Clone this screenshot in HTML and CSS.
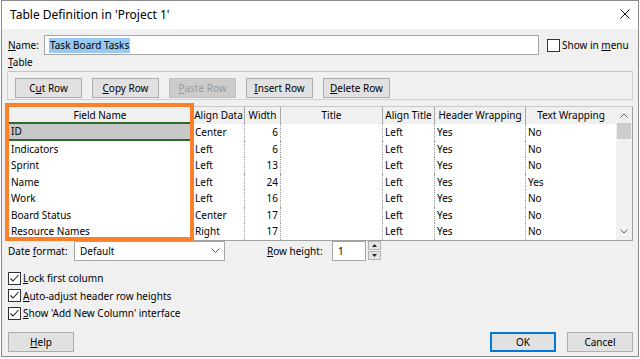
FILE: index.html
```html
<!DOCTYPE html>
<html lang="en">
<head>
    <meta charset="UTF-8">
    <title>Table Definition</title>
    <link rel="stylesheet" href="styles.css">
</head>
<body>
<div class="dialog">
    <div class="titlebar">
        <span class="title">Table Definition in 'Project 1'</span>
        <svg class="close" width="10" height="10" viewBox="0 0 10 10"><path d="M0.5 0.5 L9.5 9.5 M9.5 0.5 L0.5 9.5" stroke="#111" stroke-width="1" fill="none"/></svg>
    </div>

    <div class="content">
        <div class="name_row">
            <label class="name_label"><u>N</u>ame:</label>
            <div class="textbox name_box"><span class="sel">Task Board Tasks</span></div>
            <label class="check"><span class="box"></span><span>Show in <u>m</u>enu</span></label>
        </div>

        <div class="section_label"><u>T</u>able</div>

        <div class="toolbar">
            <button class="btn">C<u>u</u>t Row</button>
            <button class="btn"><u>C</u>opy Row</button>
            <button class="btn disabled"><u>P</u>aste Row</button>
            <button class="btn"><u>I</u>nsert Row</button>
            <button class="btn"><u>D</u>elete Row</button>
        </div>

        <div class="grid">
            <div class="cells">
                <div class="hd field_hd">Field Name</div>
                <div class="hd">Align Data</div>
                <div class="hd">Width</div>
                <div class="hd">Title</div>
                <div class="hd">Align Title</div>
                <div class="hd">Header Wrapping</div>
                <div class="hd last">Text Wrapping</div>

                <div class="c field current">ID</div>
                <div class="c dot">Center</div>
                <div class="c dot num">6</div>
                <div class="c dot"></div>
                <div class="c dot">Left</div>
                <div class="c dot">Yes</div>
                <div class="c">No</div>

                <div class="c field">Indicators</div>
                <div class="c dot">Left</div>
                <div class="c dot num">6</div>
                <div class="c dot"></div>
                <div class="c dot">Left</div>
                <div class="c dot">Yes</div>
                <div class="c">No</div>

                <div class="c field">Sprint</div>
                <div class="c dot">Left</div>
                <div class="c dot num">13</div>
                <div class="c dot"></div>
                <div class="c dot">Left</div>
                <div class="c dot">Yes</div>
                <div class="c">No</div>

                <div class="c field">Name</div>
                <div class="c dot">Left</div>
                <div class="c dot num">24</div>
                <div class="c dot"></div>
                <div class="c dot">Left</div>
                <div class="c dot">Yes</div>
                <div class="c">Yes</div>

                <div class="c field">Work</div>
                <div class="c dot">Left</div>
                <div class="c dot num">16</div>
                <div class="c dot"></div>
                <div class="c dot">Left</div>
                <div class="c dot">Yes</div>
                <div class="c">No</div>

                <div class="c field">Board Status</div>
                <div class="c dot">Center</div>
                <div class="c dot num">17</div>
                <div class="c dot"></div>
                <div class="c dot">Left</div>
                <div class="c dot">Yes</div>
                <div class="c">No</div>

                <div class="c field">Resource Names</div>
                <div class="c dot">Right</div>
                <div class="c dot num">17</div>
                <div class="c dot"></div>
                <div class="c dot">Left</div>
                <div class="c dot">Yes</div>
                <div class="c">No</div>
            </div>
            <div class="scrollbar">
                <div class="arrow">
                    <svg width="8" height="5" viewBox="0 0 8 5"><path d="M0.5 4.5 L4 1 L7.5 4.5" stroke="#606060" fill="none"/></svg>
                </div>
                <div class="thumb"></div>
                <div class="track"></div>
                <div class="arrow">
                    <svg width="8" height="5" viewBox="0 0 8 5"><path d="M0.5 0.5 L4 4 L7.5 0.5" stroke="#606060" fill="none"/></svg>
                </div>
            </div>
            <!-- 強調枠 -->
            <div class="highlight"></div>
        </div>

        <div class="format_row">
            <label class="fmt_label">Date <u>f</u>ormat:</label>
            <div class="textbox combo">
                <span>Default</span>
                <svg width="9" height="5" viewBox="0 0 9 5"><path d="M0.5 0.5 L4.5 4.5 L8.5 0.5" stroke="#555" fill="none"/></svg>
            </div>
            <label class="rh_label"><u>R</u>ow height:</label>
            <div class="textbox spin_box">1</div>
            <div class="spin">
                <div class="spin_btn"><svg width="5" height="3" viewBox="0 0 5 3"><path d="M0 3 L2.5 0 L5 3 Z" fill="#222"/></svg></div>
                <div class="spin_btn"><svg width="5" height="3" viewBox="0 0 5 3"><path d="M0 0 L2.5 3 L5 0 Z" fill="#222"/></svg></div>
            </div>
        </div>

        <div class="checks">
            <label class="check"><span class="box"><svg width="11" height="11" viewBox="0 0 11 11"><path d="M1.5 5.5 L4 8 L9.5 2" stroke="#222" stroke-width="1.1" fill="none"/></svg></span><span><u>L</u>ock first column</span></label>
            <label class="check"><span class="box"><svg width="11" height="11" viewBox="0 0 11 11"><path d="M1.5 5.5 L4 8 L9.5 2" stroke="#222" stroke-width="1.1" fill="none"/></svg></span><span><u>A</u>uto-adjust header row heights</span></label>
            <label class="check"><span class="box"><svg width="11" height="11" viewBox="0 0 11 11"><path d="M1.5 5.5 L4 8 L9.5 2" stroke="#222" stroke-width="1.1" fill="none"/></svg></span><span><u>S</u>how 'Add New Column' interface</span></label>
        </div>

        <div class="footer">
            <button class="btn"><u>H</u>elp</button>
            <div class="footer_right">
                <button class="btn default">OK</button>
                <button class="btn">Cancel</button>
            </div>
        </div>
    </div>
</div>
</body>
</html>
```

FILE: styles.css
```css
body {
    margin: 0;
    background-color: #fff;
    font-family: "Noto Sans", "Open Sans", sans-serif;
    font-size: 10px;
    color: #000;
}
u {
    text-decoration-thickness: 1px;
    text-underline-offset: 1px;
}

/*ダイアログ全体*/
.dialog {
    width: 638px;
    height: 357px;
    margin-left: 1px;
    box-sizing: border-box;
    border: 1px solid #8a8a8a;
    background-color: #f0f0f0;
    display: flex;
    flex-direction: column;
}

.titlebar {
    height: 28px;
    background-color: #fff;
    display: flex;
    align-items: center;
    justify-content: space-between;
    padding: 0 8px 0 8px;
}
.title {
    font-size: 12px;
    margin-top: -1px;
}
.close {
    margin-top: -3px;
}

.content {
    padding: 0 5px 0 6px;
    flex: 1;
}

/*テキストボックス*/
.textbox {
    box-sizing: border-box;
    height: 20px;
    background-color: #fff;
    border: 1px solid #a5a5a5;
    display: flex;
    align-items: center;
}

.name_row {
    display: flex;
    align-items: center;
    margin-top: 6px;
    height: 20px;
}
.name_label {
    width: 36px;
}
.name_box {
    width: 495px;
    padding-left: 4px;
}
.sel {
    background-color: #99c9ef;
    line-height: 15px;
    padding: 0 1px;
}
.name_row .check {
    margin-left: 8px;
}

.check {
    display: flex;
    align-items: center;
    gap: 2px;
}
.box {
    width: 13px;
    height: 13px;
    box-sizing: border-box;
    border: 1px solid #333;
    background-color: #fff;
    display: flex;
    align-items: center;
    justify-content: center;
}

.section_label {
    height: 12px;
    line-height: 12px;
    margin-top: 1px;
}

/*ボタン類*/
.toolbar {
    margin: 3px 0 0 -1px;
    width: 626px;
    height: 29px;
    box-sizing: border-box;
    border: 1px solid #d0d0d0;
    border-top-color: #c4c4c4;
    padding: 6px 0 0 7px;
    display: flex;
    gap: 10px;
}
.btn {
    width: 67px;
    height: 20px;
    box-sizing: border-box;
    border: 1px solid #adadad;
    background-color: #e1e1e1;
    font-family: inherit;
    font-size: 10px;
    color: #000;
    padding: 0;
}
.btn.disabled {
    background-color: #cccccc;
    border-color: #bfbfbf;
    color: #9a9a9a;
}
.btn.default {
    border: 2px solid #0078d7;
}

/*グリッド*/
.grid {
    position: relative;
    margin: 6px 0 0 -1px;
    width: 626px;
    box-sizing: border-box;
    border: 1px solid #a0a0a0;
    border-top-color: #c8c8c8;
    display: flex;
    background-color: #fff;
}
.cells {
    display: grid;
    grid-template-columns: 185px 52px 36px 102px 52px 91px 90px;
    grid-template-rows: 17px repeat(7, 16.5px);
}
.hd {
    background-color: #f0f0f0;
    border-right: 1px solid #a8a8a8;
    box-sizing: border-box;
    text-align: center;
    white-space: nowrap;
    overflow: hidden;
    line-height: 17px;
}
.hd.last {
    border-right: none;
}
.field_hd {
    border-bottom: 2px solid #2b6a2b;
    line-height: 16px;
}
.c {
    box-sizing: border-box;
    padding-left: 2px;
    white-space: nowrap;
    overflow: hidden;
    line-height: 16.5px;
}
.c.dot {
    border-right: 1px dotted #9a9a9a;
}
.c.num {
    text-align: right;
    padding-right: 2px;
}
.c.field {
    padding-left: 3px;
}
.c.current {
    background-color: #c8c8c8;
    border-bottom: 2px solid #2b6a2b;
    line-height: 15px;
}

.scrollbar {
    width: 16px;
    background-color: #f0f0f0;
    display: flex;
    flex-direction: column;
}
.arrow {
    height: 16px;
    display: flex;
    align-items: center;
    justify-content: center;
}
.thumb {
    height: 16px;
    margin: 0 1px;
    background-color: #cdcdcd;
}
.track {
    flex: 1;
}

.highlight {
    position: absolute;
    left: -3px;
    top: -4px;
    width: 189px;
    height: 138px;
    box-sizing: border-box;
    border: 4px solid #fd7f27;
}

/*日付形式・行の高さ*/
.format_row {
    display: flex;
    align-items: center;
    margin-top: 0;
    height: 20px;
}
.fmt_label {
    width: 66px;
}
.combo {
    width: 151px;
    justify-content: space-between;
    padding: 0 4px 0 5px;
}
.rh_label {
    width: 65px;
    margin-left: 42px;
}
.spin_box {
    width: 34px;
    padding-left: 5px;
}
.spin {
    margin-left: 2px;
    width: 13px;
    height: 19px;
    display: flex;
    flex-direction: column;
    gap: 1px;
}
.spin_btn {
    flex: 1;
    box-sizing: border-box;
    border: 1px solid #b5b5b5;
    background-color: #e5e5e5;
    display: flex;
    align-items: center;
    justify-content: center;
}

.checks {
    margin-top: 9px;
    display: flex;
    flex-direction: column;
}
.checks .check {
    height: 17.5px;
}

.footer {
    margin-top: 10px;
    display: flex;
    justify-content: space-between;
}
.footer .btn {
    width: 66px;
}
.footer_right {
    display: flex;
    gap: 11px;
}
```
